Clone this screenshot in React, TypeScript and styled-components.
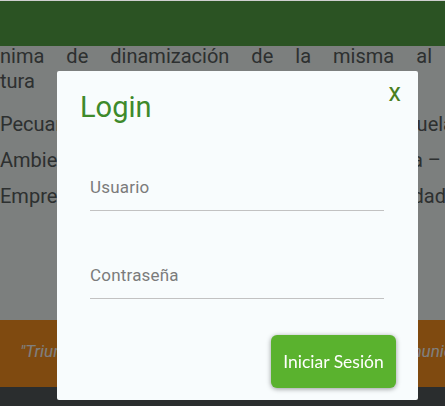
import styled, { createGlobalStyle } from "styled-components";

const GlobalStyle = createGlobalStyle`
  html, body {
    margin: 0;
    padding: 0;
    overflow: hidden;
  }
  body {
    background: #cfcfcf;
    font-family: Roboto, "Liberation Sans", sans-serif;
  }
`;

const Page = styled.div`
  margin-top: 1px;
  display: flex;
  flex-direction: column;
  height: 405px;
`;

const TopBar = styled.header`
  height: 45px;
  background: #56a646;
  flex-shrink: 0;
`;

const Main = styled.main`
  height: 274px;
  background: #f8fefc;
  color: #5a6060;
  font-size: 20px;
  flex-shrink: 0;
`;

const Intro = styled.p`
  margin: -2px 0 0;
  line-height: 25px;
`;

const Line = styled.span<{ $width?: number; $last?: boolean }>`
  display: block;
  width: ${(p) => (p.$width ? `${p.$width}px` : "auto")};
  white-space: nowrap;
  text-align: justify;
  text-align-last: ${(p) => (p.$last ? "left" : "justify")};
`;

const List = styled.ul`
  margin: 12px 0 0;
  padding: 0;
  list-style: none;
`;

const Item = styled.li<{ $width: number }>`
  width: ${(p) => p.$width}px;
  line-height: 36px;
  white-space: nowrap;
  text-align: justify;
  text-align-last: justify;
`;

const Keep = styled.span`
  display: inline-block;
`;

const Band = styled.section`
  height: 67px;
  box-sizing: border-box;
  padding: 21px 0 0 20px;
  background: #ff9420;
  flex-shrink: 0;
`;

const Quote = styled.q`
  display: block;
  width: 477px;
  color: #ffffff;
  font-size: 17px;
  font-style: italic;
  line-height: 20px;
  white-space: nowrap;
  text-align: justify;
  text-align-last: justify;
  quotes: '"' '"';
`;

const Footer = styled.footer`
  flex: 1;
  background: #545a5c;
`;

const Backdrop = styled.div`
  position: fixed;
  top: 1px;
  left: 0;
  right: 0;
  bottom: 0;
  background: rgba(0, 0, 0, 0.5);
`;

const Modal = styled.div`
  position: fixed;
  top: 71px;
  left: 57px;
  width: 361px;
  background: #f8fcfd;
  border-radius: 2px;
  display: flex;
  flex-direction: column;
`;

const ModalHeader = styled.div`
  display: flex;
  justify-content: space-between;
  align-items: flex-start;
  padding: 10px 17px 0 23px;
`;

const Title = styled.h4`
  margin: 9px 0 0;
  font-size: 29px;
  font-weight: 400;
  line-height: 34px;
  color: #3e8a2b;
`;

const Close = styled.button`
  border: 0;
  background: none;
  padding: 0;
  font-family: Roboto, "Liberation Sans", sans-serif;
  font-size: 25px;
  font-weight: 400;
  line-height: 24px;
  color: #4a7f1f;
  cursor: pointer;
`;

const Form = styled.form`
  display: flex;
  flex-direction: column;
  gap: 54px;
  padding: 53px 34px 0 33px;
`;

const Input = styled.input`
  display: block;
  width: 100%;
  height: 34px;
  box-sizing: border-box;
  padding: 0 0 13px;
  border: 0;
  border-bottom: 1px solid #c2c2c2;
  background: transparent;
  font-family: Roboto, "Liberation Sans", sans-serif;
  font-size: 17px;
  letter-spacing: 0.2px;
  color: #555;
  outline: none;

  &::placeholder {
    color: #7b7b7b;
  }
`;

const Actions = styled.div`
  display: flex;
  justify-content: flex-end;
  padding: 36px 22px 12px;
`;

const Submit = styled.button`
  width: 125px;
  height: 53px;
  border: 0;
  border-radius: 6px;
  background: #5ab22e;
  box-shadow: 0 1px 5px rgba(0, 0, 0, 0.4);
  color: #fff;
  font-family: Lato, "Open Sans", sans-serif;
  font-size: 17.5px;
  cursor: pointer;
`;

export default function App() {
  return (
    <>
      <GlobalStyle />
      <Page>
        <TopBar />
        <Main>
          <Intro>
            <Line $width={432}>nima de dinamización de la misma al</Line>
            <Line $last>tura</Line>
          </Intro>
          <List>
            <Item $width={454}>Pecuaria, Agroindustria y Escuela</Item>
            <Item $width={441}>
              Ambiental, Turismo y <Keep>Tecnología –</Keep>
            </Item>
            <Item $width={446}>Empresarial y Contabilidad</Item>
          </List>
        </Main>
        <Band>
          <Quote>Triunfando juntos hacia la comunicación</Quote>
        </Band>
        <Footer />
      </Page>
      <Backdrop />
      <Modal role="dialog">
        <ModalHeader>
          <Title>Login</Title>
          <Close type="button" aria-label="Cerrar">
            x
          </Close>
        </ModalHeader>
        <Form onSubmit={(e) => e.preventDefault()}>
          <Input type="text" placeholder="Usuario" />
          <Input type="password" placeholder="Contraseña" />
        </Form>
        <Actions>
          <Submit type="button">Iniciar Sesión</Submit>
        </Actions>
      </Modal>
    </>
  );
}
